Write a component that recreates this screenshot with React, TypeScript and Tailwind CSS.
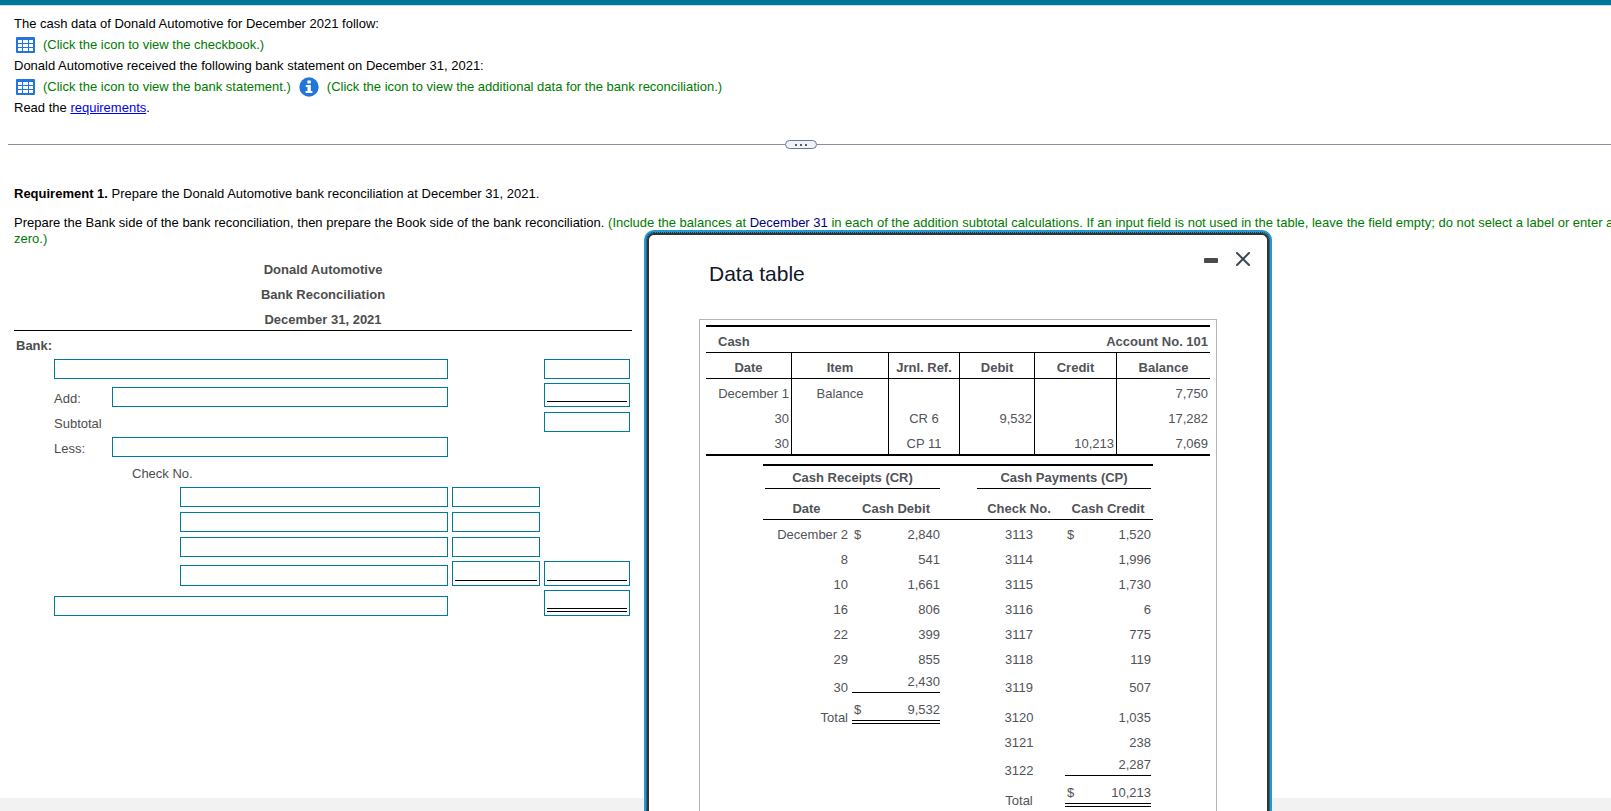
import type { ReactNode } from 'react'
import { X } from 'lucide-react'
import clsx from 'clsx'

const ledgerRows = [
  { date: 'December 1', item: 'Balance', ref: '', debit: '', credit: '', balance: '7,750' },
  { date: '30', item: '', ref: 'CR 6', debit: '9,532', credit: '', balance: '17,282' },
  { date: '30', item: '', ref: 'CP 11', debit: '', credit: '10,213', balance: '7,069' },
]

type Rule = 'single' | 'double'

interface JournalRow {
  date?: string
  debit?: string
  debitRule?: Rule
  check: string
  credit: string
  creditRule?: Rule
  height: string
}

const journalRows: JournalRow[] = [
  { date: 'December 2', debit: '$2,840', check: '3113', credit: '$1,520', height: 'h-[25px]' },
  { date: '8', debit: '541', check: '3114', credit: '1,996', height: 'h-[25px]' },
  { date: '10', debit: '1,661', check: '3115', credit: '1,730', height: 'h-[25px]' },
  { date: '16', debit: '806', check: '3116', credit: '6', height: 'h-[25px]' },
  { date: '22', debit: '399', check: '3117', credit: '775', height: 'h-[25px]' },
  { date: '29', debit: '855', check: '3118', credit: '119', height: 'h-[25px]' },
  { date: '30', debit: '2,430', debitRule: 'single', check: '3119', credit: '507', height: 'h-[28px]' },
  { date: 'Total', debit: '$9,532', debitRule: 'double', check: '3120', credit: '1,035', height: 'h-[30px]' },
  { check: '3121', credit: '238', height: 'h-[25px]' },
  { check: '3122', credit: '2,287', creditRule: 'single', height: 'h-[28px]' },
  { check: 'Total', credit: '$10,213', creditRule: 'double', height: 'h-[30px]' },
]

function TableIcon() {
  return (
    <svg width="19" height="16" viewBox="0 0 19 16" aria-hidden="true">
      <rect width="19" height="16" rx="1" fill="#2376d9" />
      <g fill="#fff">
        {[3, 7, 11].map((y) => (
          <g key={y}>
            <rect x="2" y={y} width="4" height="3" />
            <rect x="7" y={y} width="5" height="3" />
            <rect x="13" y={y} width="4" height="3" />
          </g>
        ))}
      </g>
    </svg>
  )
}

function InfoIcon() {
  return (
    <svg width="20" height="20" viewBox="0 0 20 20" aria-hidden="true">
      <circle cx="10" cy="10" r="9.7" fill="#2376d9" />
      <path d="M8.4 3.5h3.4v3H8.4zM6.8 8h5v6h1.6v2H6.6v-2h1.9v-4H6.8z" fill="#fff" />
    </svg>
  )
}

function IconLink({ icon, children }: { icon: ReactNode; children: ReactNode }) {
  return (
    <button type="button" className="flex items-center gap-2 text-[#007a00]">
      {icon}
      <span>{children}</span>
    </button>
  )
}

function Field({ label, tall }: { label: string; tall?: boolean }) {
  return (
    <input
      type="text"
      aria-label={label}
      className={clsx('block w-full border border-[#007a99] bg-white px-1 outline-none', tall ? 'h-[21px]' : 'h-[20px]')}
    />
  )
}

// Amount box whose value sits on a single or double accounting rule
function RuledField({ label, rule, tall }: { label: string; rule: Rule; tall?: boolean }) {
  return (
    <div className={clsx('border border-[#007a99] bg-white px-[2px]', rule === 'double' ? 'pb-[3px]' : 'pb-[4px]')}>
      <input
        type="text"
        aria-label={label}
        className={clsx(
          'block w-full border-black px-1 outline-none',
          rule === 'double' ? 'h-[21px] border-b-4 border-double' : 'border-b',
          rule === 'single' && (tall ? 'h-[19px]' : 'h-[18px]'),
        )}
      />
    </div>
  )
}

function Reconciliation() {
  return (
    <table className="w-[618px] table-fixed border-separate border-spacing-0 text-left leading-[16px] text-[#4d4d4d] [&_td]:p-0 [&_td]:align-bottom">
      <caption className="border-b border-black pb-[2px] font-bold">
        <p className="pt-[9px]">Donald Automotive</p>
        <p className="pt-[9px]">Bank Reconciliation</p>
        <p className="pt-[9px]">December 31, 2021</p>
      </caption>
      <colgroup>
        <col className="w-[40px]" />
        <col className="w-[58px]" />
        <col className="w-[68px]" />
        <col className="w-[272px]" />
        <col className="w-[92px]" />
        <col className="w-[88px]" />
      </colgroup>
      <tbody>
        <tr className="h-[23px]">
          <th colSpan={6} className="p-0 pl-[2px] align-bottom font-bold">Bank:</th>
        </tr>
        <tr className="h-[25px]">
          <td />
          <td colSpan={3}><div className="pr-1"><Field label="Bank balance label" /></div></td>
          <td />
          <td><div className="pr-[2px]"><Field label="Bank balance" /></div></td>
        </tr>
        <tr className="h-[28px]">
          <td />
          <td>Add:</td>
          <td colSpan={2}><div className="pr-1"><Field label="Addition label" /></div></td>
          <td />
          <td><div className="pr-[2px]"><RuledField label="Addition amount" rule="single" /></div></td>
        </tr>
        <tr className="h-[25px]">
          <td />
          <td colSpan={4}>Subtotal</td>
          <td><div className="pr-[2px]"><Field label="Subtotal" /></div></td>
        </tr>
        <tr className="h-[25px]">
          <td />
          <td>Less:</td>
          <td colSpan={2}><div className="pr-1"><Field label="Deduction label" /></div></td>
          <td colSpan={2} />
        </tr>
        <tr className="h-[25px]">
          <td colSpan={2} />
          <td colSpan={4}><div className="pl-5">Check No.</div></td>
        </tr>
        {[1, 2, 3].map((n) => (
          <tr key={n} className="h-[25px]">
            <td colSpan={3} />
            <td><div className="pr-1"><Field label={`Check ${n} number`} /></div></td>
            <td><div className="pr-1"><Field label={`Check ${n} amount`} /></div></td>
            <td />
          </tr>
        ))}
        <tr className="h-[29px]">
          <td colSpan={3} />
          <td><div className="pr-1"><Field label="Check 4 number" tall /></div></td>
          <td><div className="pr-1"><RuledField label="Check 4 amount" rule="single" tall /></div></td>
          <td><div className="pr-[2px]"><RuledField label="Total deductions" rule="single" tall /></div></td>
        </tr>
        <tr className="h-[30px]">
          <td />
          <td colSpan={3}><div className="pr-1"><Field label="Adjusted balance label" /></div></td>
          <td />
          <td><div className="pr-[2px]"><RuledField label="Adjusted balance" rule="double" /></div></td>
        </tr>
      </tbody>
    </table>
  )
}

function Ledger() {
  const head = 'border-b border-black pt-[6px] pb-px font-bold'
  const cell = 'border-r border-black pt-[6px] pb-px'
  return (
    <table className="w-full table-fixed border-separate border-spacing-0 border-y-2 border-black text-center">
      <colgroup>
        <col className="w-[86px]" />
        <col className="w-[97px]" />
        <col className="w-[71px]" />
        <col className="w-[75px]" />
        <col className="w-[82px]" />
        <col className="w-[93px]" />
      </colgroup>
      <thead>
        <tr>
          <th colSpan={3} className={clsx(head, 'pl-3 text-left')}>Cash</th>
          <th colSpan={3} className={clsx(head, 'pr-[2px] text-right')}>Account No. 101</th>
        </tr>
        <tr>
          {['Date', 'Item', 'Jrnl. Ref.', 'Debit', 'Credit'].map((title) => (
            <th key={title} className={clsx(head, 'border-r whitespace-nowrap')}>{title}</th>
          ))}
          <th className={head}>Balance</th>
        </tr>
      </thead>
      <tbody>
        {ledgerRows.map((row, i) => (
          <tr key={i}>
            <td className={clsx(cell, 'pr-[2px] text-right whitespace-nowrap')}>{row.date}</td>
            <td className={cell}>{row.item}</td>
            <td className={cell}>{row.ref}</td>
            <td className={clsx(cell, 'pr-[2px] text-right')}>{row.debit}</td>
            <td className={clsx(cell, 'pr-[2px] text-right')}>{row.credit}</td>
            <td className="pt-[6px] pr-[2px] pb-px text-right">{row.balance}</td>
          </tr>
        ))}
      </tbody>
    </table>
  )
}

function Amount({ value, rule }: { value?: string; rule?: Rule }) {
  if (!value) return null
  const dollar = value.startsWith('$')
  return (
    <div className={clsx(rule === 'single' && 'pb-[5px]', rule === 'double' && 'pb-[4px]')}>
      <div
        className={clsx(
          'mx-[2px] flex justify-between border-black pb-px pl-[2px]',
          rule === 'single' && 'border-b',
          rule === 'double' && 'border-b-4 border-double',
        )}
      >
        <span>{dollar ? '$' : ''}</span>
        <span>{dollar ? value.slice(1) : value}</span>
      </div>
    </div>
  )
}

function Journals() {
  return (
    <table className="mx-auto mt-2 w-[390px] table-fixed border-separate border-spacing-0 border-t-2 border-black text-center [&_td]:p-0 [&_td]:align-bottom">
      <colgroup>
        <col className="w-[87px]" />
        <col className="w-[92px]" />
        <col className="w-[33px]" />
        <col className="w-[88px]" />
        <col className="w-[90px]" />
      </colgroup>
      <thead>
        <tr className="h-[25px] align-top font-bold">
          <th colSpan={2} className="p-0 pt-[3px]">
            <div className="mx-[2px] border-b border-black pb-px">Cash Receipts (CR)</div>
          </th>
          <td />
          <th colSpan={2} className="p-0 pt-[3px]">
            <div className="mx-[2px] border-b border-black pb-px">Cash Payments (CP)</div>
          </th>
        </tr>
        <tr className="h-[29px] align-bottom">
          {['Date', 'Cash Debit', '', 'Check No.', 'Cash Credit'].map((title, i) => (
            <th key={i} className="border-b border-black p-0 pb-px">{title}</th>
          ))}
        </tr>
      </thead>
      <tbody>
        {journalRows.map((row) => (
          <tr key={row.check} className={row.height}>
            <td><div className="pr-[2px] pb-px text-right whitespace-nowrap">{row.date}</div></td>
            <td><Amount value={row.debit} rule={row.debitRule} /></td>
            <td />
            <td><div className="pb-px">{row.check}</div></td>
            <td><Amount value={row.credit} rule={row.creditRule} /></td>
          </tr>
        ))}
      </tbody>
    </table>
  )
}

function DataTableDialog() {
  return (
    <div
      role="dialog"
      aria-labelledby="dialog-title"
      className="absolute top-[230px] bottom-0 left-[644px] flex w-[628px] rounded-t-[10px] border-2 border-b-0 border-[#1f9ad6] bg-[#1f9ad6]"
    >
      <div className="flex flex-1 rounded-t-[8px] border border-b-0 border-dotted border-[#333]">
        <div className="flex flex-1 flex-col rounded-t-[7px] border-2 border-b-0 border-[#333] bg-white px-[50px]">
          <div className="flex h-[84px] justify-between">
            <h2 id="dialog-title" className="pt-[26px] pl-[10px] text-[21px] leading-[26px] text-[#0f172a]">Data table</h2>
            <div className="-mr-[38px] flex h-[48px] items-center gap-[13px] text-[#3c4654]">
              <button type="button" aria-label="Minimize" className="flex h-[20px] w-[14px] items-center">
                <span className="mt-[3px] h-[5px] w-[14px] rounded-[1px] bg-[#4a4a4a]" />
              </button>
              <button type="button" aria-label="Close">
                <X size={24} strokeWidth={2} />
              </button>
            </div>
          </div>
          <div className="flex-1 border border-b-0 border-[#b5b5b5] px-[6px] pt-[5px] leading-[18px] text-[#505359]">
            <Ledger />
            <Journals />
          </div>
        </div>
      </div>
    </div>
  )
}

export default function App() {
  return (
    <div className="relative flex h-screen flex-col overflow-hidden bg-white font-['Liberation_Sans',Arial,sans-serif] text-[13px] text-black">
      <header className="h-[6px] shrink-0 border-b border-[#c5dde6] bg-[#00779a]" />

      <section className="px-[14px] pt-[7px] leading-[21px]">
        <p>The cash data of Donald Automotive for December 2021 follow:</p>
        <div className="flex h-[21px] items-center pl-[2px]">
          <IconLink icon={<TableIcon />}>(Click the icon to view the checkbook.)</IconLink>
        </div>
        <p>Donald Automotive received the following bank statement on December 31, 2021:</p>
        <div className="flex h-[21px] items-center gap-2 pl-[2px]">
          <IconLink icon={<TableIcon />}>(Click the icon to view the bank statement.)</IconLink>
          <IconLink icon={<InfoIcon />}>(Click the icon to view the additional data for the bank reconciliation.)</IconLink>
        </div>
        <p>
          Read the <a href="#requirements" className="text-[#0000ee] underline">requirements</a>.
        </p>
      </section>

      <div className="mt-[22px] ml-2 flex items-center">
        <div className="h-px flex-1 bg-[#868ca3]" />
        <button
          type="button"
          aria-label="Resize panels"
          className="flex h-[9px] w-[32px] items-center justify-center gap-[3px] rounded-full border border-[#6f7790] bg-[#f1f2f7]"
        >
          <span className="size-[2px] bg-[#555b6b]" />
          <span className="size-[2px] bg-[#555b6b]" />
          <span className="size-[2px] bg-[#555b6b]" />
        </button>
        <div className="h-px flex-1 bg-[#868ca3]" />
        <div className="h-px w-[18px] bg-[#868ca3]" />
      </div>

      <main className="pt-[37px] pl-[14px] leading-[16px]">
        <p><b>Requirement 1.</b> Prepare the Donald Automotive bank reconciliation at December 31, 2021.</p>
        <p className="-mr-4 mt-[13px]">
          Prepare the Bank side of the bank reconciliation, then prepare the Book side of the bank reconciliation.{' '}
          <span className="text-[#007a00]">
            (Include the balances at <span className="text-[#000080]">December 31</span> in each of the addition subtotal
            calculations. If an input field is not used in the table, leave the field empty; do not select a label or enter
            a zero.)
          </span>
        </p>
        <div className="mt-[6px]">
          <Reconciliation />
        </div>
      </main>

      <footer className="mt-auto h-[13px] shrink-0 bg-[#f2f2f2]" />

      <DataTableDialog />
    </div>
  )
}
